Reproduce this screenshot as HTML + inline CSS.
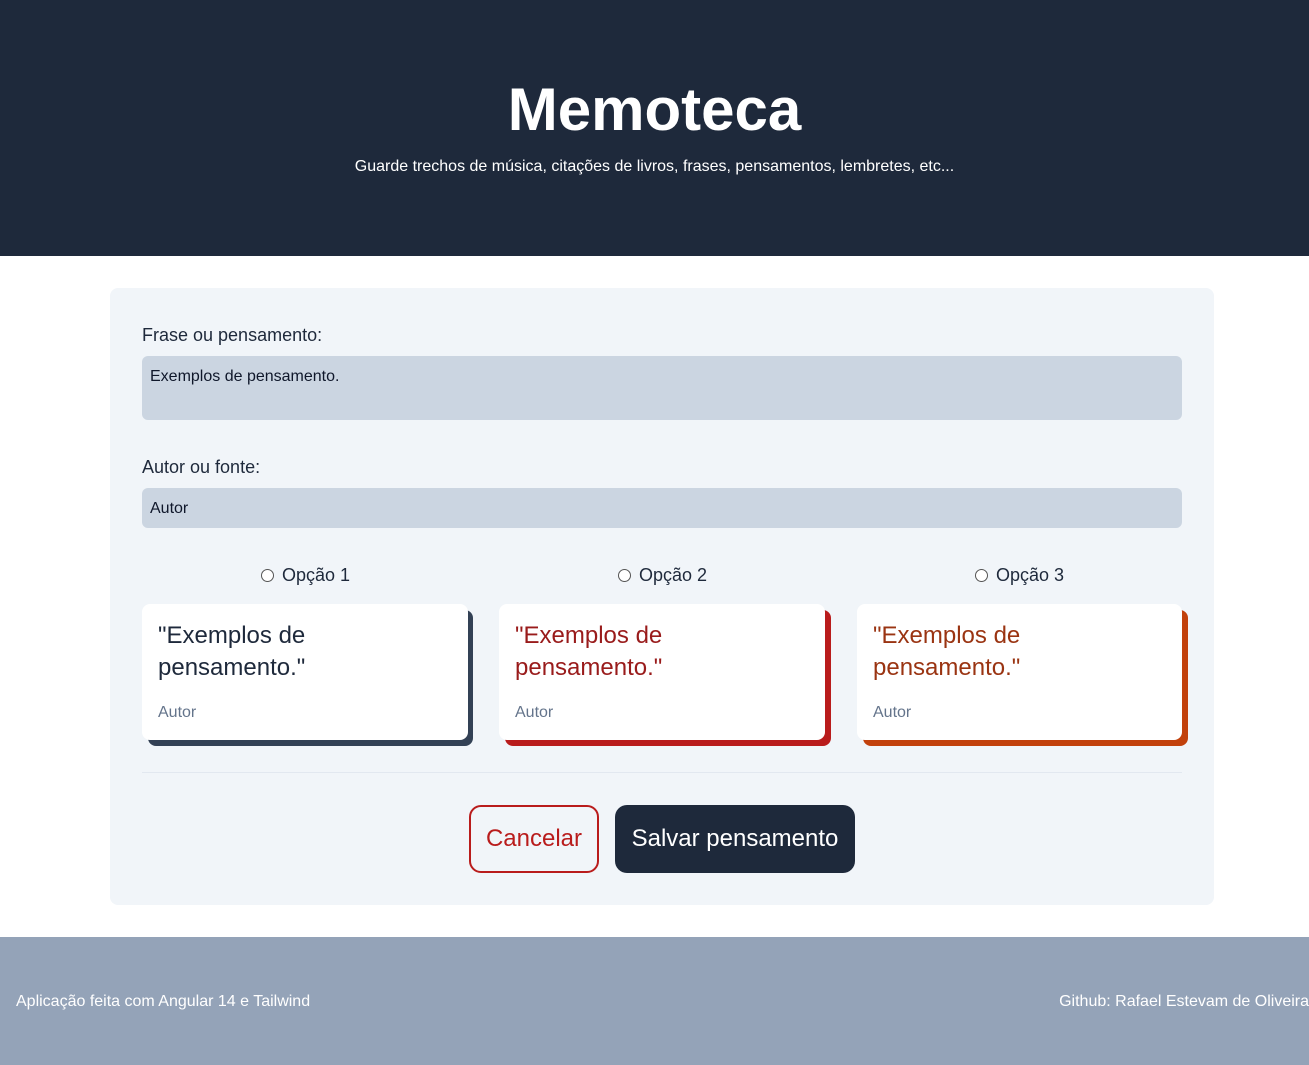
<!DOCTYPE html>
<html><head><meta charset="utf-8"><style>
*{box-sizing:border-box;margin:0;padding:0}
body{width:1309px;height:1065px;position:relative;background:#fff;font-family:"Liberation Sans",sans-serif;color:#1e293b;overflow:hidden}
.hdr{position:absolute;left:0;top:0;width:1309px;height:256px;background:#1e293b;color:#fff;text-align:center}
.hdr h1{position:absolute;top:75px;width:100%;font-size:60px;font-weight:bold}
.hdr p{position:absolute;top:158px;width:100%;font-size:16px}
.box{position:absolute;left:110px;top:288px;width:1104px;height:617px;background:#f1f5f9;border-radius:8px}
.a{position:absolute}
.lbl{font-size:18px;color:#1e293b}
.inp{background:#cbd5e1;border-radius:6px;font-size:16px;padding:12px 8px;color:#0f172a}
.radio{font-size:18px;color:#1e293b}
.radio span{display:inline-block;width:13px;height:13px;border:1px solid #555;border-radius:50%;background:#fff;vertical-align:-1px;margin-right:8px}
.sh{border-radius:8px}
.card{background:#fff;border-radius:8px;width:326px;height:136px;padding:16px 16px}
.card .q{font-size:24px;line-height:32px}
.card .au{font-size:16px;color:#64748b;margin-top:20px}
.ft{position:absolute;left:0;top:937px;width:1309px;height:128px;background:#94a3b8;color:#fff;font-size:16px}
</style></head><body>
<div class="hdr"><h1>Memoteca</h1><p>Guarde trechos de música, citações de livros, frases, pensamentos, lembretes, etc...</p></div>
<div class="box"></div>
<div class="a lbl" style="left:142px;top:325px">Frase ou pensamento:</div>
<div class="a inp" style="left:142px;top:356px;width:1040px;height:64px">Exemplos de pensamento.</div>
<div class="a lbl" style="left:142px;top:457px">Autor ou fonte:</div>
<div class="a inp" style="left:142px;top:488px;width:1040px;height:40px;padding-top:12px">Autor</div>
<div class="a radio" style="left:261px;top:565px"><span></span>Opção 1</div>
<div class="a radio" style="left:618px;top:565px"><span></span>Opção 2</div>
<div class="a radio" style="left:975px;top:565px"><span></span>Opção 3</div>
<div class="a sh" style="left:148px;top:610px;width:325px;height:136px;background:#334155"></div>
<div class="a card" style="left:142px;top:604px"><div class="q" style="color:#1e293b">"Exemplos de<br>pensamento."</div><div class="au">Autor</div></div>
<div class="a sh" style="left:505px;top:610px;width:326px;height:136px;background:#b91c1c"></div>
<div class="a card" style="left:499px;top:604px"><div class="q" style="color:#991b1b">"Exemplos de<br>pensamento."</div><div class="au">Autor</div></div>
<div class="a sh" style="left:863px;top:610px;width:325px;height:136px;background:#c2410c"></div>
<div class="a card" style="left:857px;top:604px;width:325px"><div class="q" style="color:#9a3412">"Exemplos de<br>pensamento."</div><div class="au">Autor</div></div>
<div class="a" style="left:142px;top:772px;width:1040px;height:1px;background:#e2e8f0"></div>
<div class="a" style="left:469px;top:805px;width:130px;height:68px;border:2px solid #b91c1c;border-radius:12px;color:#b91c1c;font-size:24px;text-align:center;line-height:64px">Cancelar</div>
<div class="a" style="left:615px;top:805px;width:240px;height:68px;background:#1e293b;border-radius:12px;color:#fff;font-size:24px;text-align:center;line-height:68px">Salvar pensamento</div>
<div class="ft"><span class="a" style="left:16px;top:56px">Aplicação feita com Angular 14 e Tailwind</span><span class="a" style="right:0;top:56px">Github: Rafael Estevam de Oliveira</span></div>
</body></html>
